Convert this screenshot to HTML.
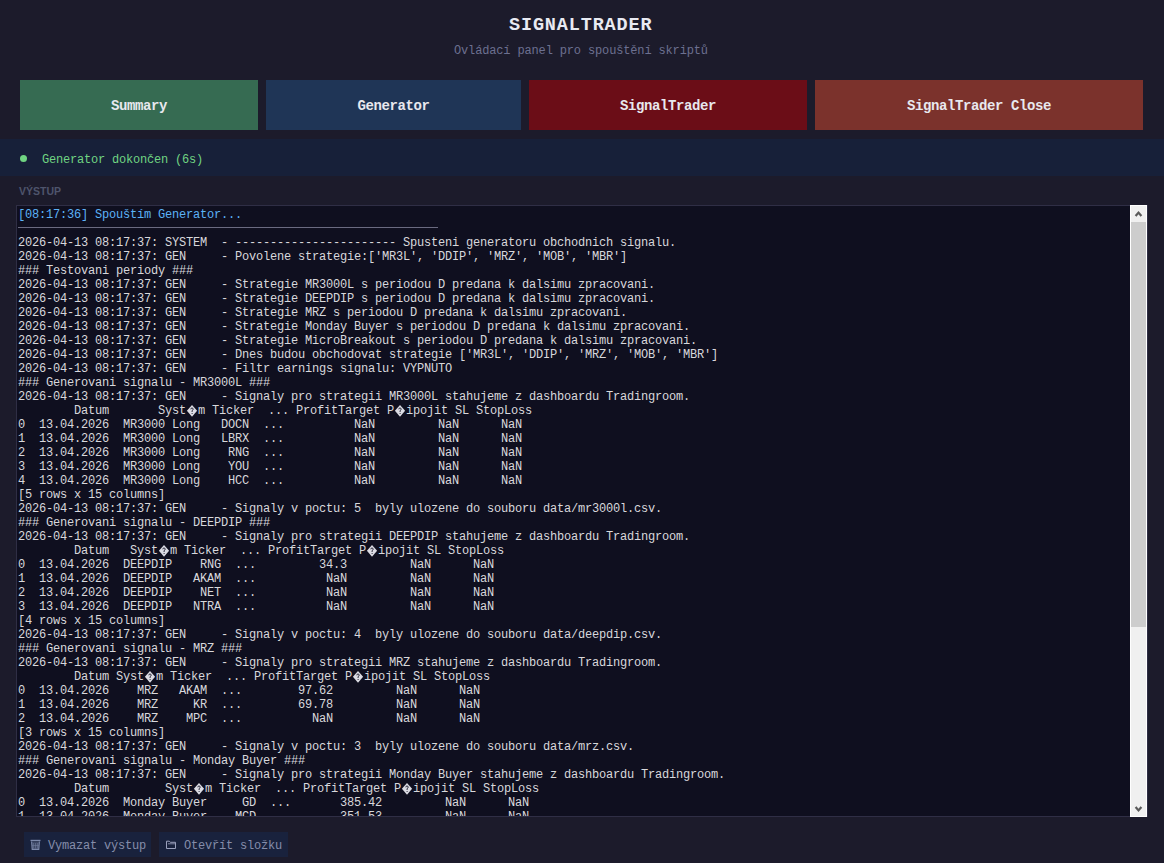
<!DOCTYPE html>
<html><head><meta charset="utf-8">
<style>
*{margin:0;padding:0;box-sizing:border-box}
html,body{width:1164px;height:863px;overflow:hidden;background:#1c1b2b;font-family:"Liberation Mono",monospace}
.abs{position:absolute}
#title{position:absolute;left:509px;top:14px;font-weight:bold;font-size:18.5px;line-height:24px;letter-spacing:0.85px;color:#e8eaf2;white-space:pre}
#sub{position:absolute;left:454px;top:43px;white-space:pre;font-size:12px;line-height:16px;letter-spacing:-0.15px;color:#6c7090}
.btn{position:absolute;top:80px;height:50px;line-height:52px;text-align:center;font-weight:bold;font-size:14px;letter-spacing:-0.4px;color:#e8e8ee}
#b1{left:20px;width:238px;background:#366b52}
#b2{left:266px;width:255px;background:#1f3556}
#b3{left:529px;width:278px;background:#6b0d17}
#b4{left:815px;width:328px;background:#7b322c}
#status{position:absolute;left:0;top:139px;width:1164px;height:37px;background:#172039}
#dot{position:absolute;left:20px;top:155px;width:7px;height:7px;border-radius:50%;background:#70d482}
#stext{position:absolute;left:42px;top:152px;font-size:12px;line-height:16px;letter-spacing:-0.2px;color:#70d482}
#lbl{position:absolute;left:19px;top:184px;font-family:"Liberation Sans",sans-serif;font-weight:bold;font-size:10.5px;line-height:14px;color:#4e546c}
#box{position:absolute;left:16px;top:205px;width:1132px;height:612px;background:#0f0f1f;border:1px solid #2f2e45;overflow:hidden}
#out{position:absolute;left:1px;top:2px;font-size:12px;line-height:14px;letter-spacing:-0.2px;color:#d8d8dc;white-space:pre}
#out div{height:14px}
#out .b{color:#5cb2f6}
#out .sep{position:relative}
#out .sep:after{content:"";position:absolute;left:0;top:5px;width:420px;height:1px;background:#6a6a80}
.rc{display:inline-block;width:12px;height:14px;vertical-align:top;letter-spacing:0}
.rc svg{display:block}
#sb{position:absolute;left:1130px;top:205px;width:17px;height:612px;background:#f0f0f0;border:1px solid #fff}
#thumb{position:absolute;left:1131px;top:222px;width:15px;height:405px;background:#cdcdcd}
.bb{position:absolute;top:832px;height:25px;background:#19223d;color:#858daa;font-size:12px;line-height:25px;letter-spacing:-0.2px;white-space:pre}
#bb1{left:24px;width:127px}
#bb2{left:159px;width:129px}
</style></head><body>
<div id="title">SIGNALTRADER</div>
<div id="sub">Ovládací panel pro spouštění skriptů</div>
<div class="btn" id="b1">Summary</div>
<div class="btn" id="b2">Generator</div>
<div class="btn" id="b3">SignalTrader</div>
<div class="btn" id="b4">SignalTrader Close</div>
<div id="status"></div>
<div id="dot"></div>
<div id="stext">Generator dokončen (6s)</div>
<div id="lbl">VÝSTUP</div>
<div id="box"><div id="out"><div class="b">[08:17:36] Spouštím Generator...</div><div class="sep"></div><div>2026-04-13 08:17:37: SYSTEM  - ----------------------- Spusteni generatoru obchodnich signalu.</div><div>2026-04-13 08:17:37: GEN     - Povolene strategie:[&#x27;MR3L&#x27;, &#x27;DDIP&#x27;, &#x27;MRZ&#x27;, &#x27;MOB&#x27;, &#x27;MBR&#x27;]</div><div>### Testovani periody ###</div><div>2026-04-13 08:17:37: GEN     - Strategie MR3000L s periodou D predana k dalsimu zpracovani.</div><div>2026-04-13 08:17:37: GEN     - Strategie DEEPDIP s periodou D predana k dalsimu zpracovani.</div><div>2026-04-13 08:17:37: GEN     - Strategie MRZ s periodou D predana k dalsimu zpracovani.</div><div>2026-04-13 08:17:37: GEN     - Strategie Monday Buyer s periodou D predana k dalsimu zpracovani.</div><div>2026-04-13 08:17:37: GEN     - Strategie MicroBreakout s periodou D predana k dalsimu zpracovani.</div><div>2026-04-13 08:17:37: GEN     - Dnes budou obchodovat strategie [&#x27;MR3L&#x27;, &#x27;DDIP&#x27;, &#x27;MRZ&#x27;, &#x27;MOB&#x27;, &#x27;MBR&#x27;]</div><div>2026-04-13 08:17:37: GEN     - Filtr earnings signalu: VYPNUTO</div><div>### Generovani signalu - MR3000L ###</div><div>2026-04-13 08:17:37: GEN     - Signaly pro strategii MR3000L stahujeme z dashboardu Tradingroom.</div><div>        Datum       Syst<span class="rc"><svg width="12" height="14" viewBox="0 0 12 14"><path d="M6 0.9 L11.1 6.8 L6 12.7 L0.9 6.8 Z" fill="#dcdce4"/><path d="M4.8 5.3 Q4.8 4 6 4 Q7.2 4 7.2 5.2 Q7.2 6 6.1 6.6 V8" stroke="#2a2a3a" stroke-width="1" fill="none"/><rect x="5.6" y="9" width="1" height="1" fill="#2a2a3a"/></svg></span>m Ticker  ... ProfitTarget P<span class="rc"><svg width="12" height="14" viewBox="0 0 12 14"><path d="M6 0.9 L11.1 6.8 L6 12.7 L0.9 6.8 Z" fill="#dcdce4"/><path d="M4.8 5.3 Q4.8 4 6 4 Q7.2 4 7.2 5.2 Q7.2 6 6.1 6.6 V8" stroke="#2a2a3a" stroke-width="1" fill="none"/><rect x="5.6" y="9" width="1" height="1" fill="#2a2a3a"/></svg></span>ipojit SL StopLoss</div><div>0  13.04.2026  MR3000 Long   DOCN  ...          NaN         NaN      NaN</div><div>1  13.04.2026  MR3000 Long   LBRX  ...          NaN         NaN      NaN</div><div>2  13.04.2026  MR3000 Long    RNG  ...          NaN         NaN      NaN</div><div>3  13.04.2026  MR3000 Long    YOU  ...          NaN         NaN      NaN</div><div>4  13.04.2026  MR3000 Long    HCC  ...          NaN         NaN      NaN</div><div>[5 rows x 15 columns]</div><div>2026-04-13 08:17:37: GEN     - Signaly v poctu: 5  byly ulozene do souboru data/mr3000l.csv.</div><div>### Generovani signalu - DEEPDIP ###</div><div>2026-04-13 08:17:37: GEN     - Signaly pro strategii DEEPDIP stahujeme z dashboardu Tradingroom.</div><div>        Datum   Syst<span class="rc"><svg width="12" height="14" viewBox="0 0 12 14"><path d="M6 0.9 L11.1 6.8 L6 12.7 L0.9 6.8 Z" fill="#dcdce4"/><path d="M4.8 5.3 Q4.8 4 6 4 Q7.2 4 7.2 5.2 Q7.2 6 6.1 6.6 V8" stroke="#2a2a3a" stroke-width="1" fill="none"/><rect x="5.6" y="9" width="1" height="1" fill="#2a2a3a"/></svg></span>m Ticker  ... ProfitTarget P<span class="rc"><svg width="12" height="14" viewBox="0 0 12 14"><path d="M6 0.9 L11.1 6.8 L6 12.7 L0.9 6.8 Z" fill="#dcdce4"/><path d="M4.8 5.3 Q4.8 4 6 4 Q7.2 4 7.2 5.2 Q7.2 6 6.1 6.6 V8" stroke="#2a2a3a" stroke-width="1" fill="none"/><rect x="5.6" y="9" width="1" height="1" fill="#2a2a3a"/></svg></span>ipojit SL StopLoss</div><div>0  13.04.2026  DEEPDIP    RNG  ...         34.3         NaN      NaN</div><div>1  13.04.2026  DEEPDIP   AKAM  ...          NaN         NaN      NaN</div><div>2  13.04.2026  DEEPDIP    NET  ...          NaN         NaN      NaN</div><div>3  13.04.2026  DEEPDIP   NTRA  ...          NaN         NaN      NaN</div><div>[4 rows x 15 columns]</div><div>2026-04-13 08:17:37: GEN     - Signaly v poctu: 4  byly ulozene do souboru data/deepdip.csv.</div><div>### Generovani signalu - MRZ ###</div><div>2026-04-13 08:17:37: GEN     - Signaly pro strategii MRZ stahujeme z dashboardu Tradingroom.</div><div>        Datum Syst<span class="rc"><svg width="12" height="14" viewBox="0 0 12 14"><path d="M6 0.9 L11.1 6.8 L6 12.7 L0.9 6.8 Z" fill="#dcdce4"/><path d="M4.8 5.3 Q4.8 4 6 4 Q7.2 4 7.2 5.2 Q7.2 6 6.1 6.6 V8" stroke="#2a2a3a" stroke-width="1" fill="none"/><rect x="5.6" y="9" width="1" height="1" fill="#2a2a3a"/></svg></span>m Ticker  ... ProfitTarget P<span class="rc"><svg width="12" height="14" viewBox="0 0 12 14"><path d="M6 0.9 L11.1 6.8 L6 12.7 L0.9 6.8 Z" fill="#dcdce4"/><path d="M4.8 5.3 Q4.8 4 6 4 Q7.2 4 7.2 5.2 Q7.2 6 6.1 6.6 V8" stroke="#2a2a3a" stroke-width="1" fill="none"/><rect x="5.6" y="9" width="1" height="1" fill="#2a2a3a"/></svg></span>ipojit SL StopLoss</div><div>0  13.04.2026    MRZ   AKAM  ...        97.62         NaN      NaN</div><div>1  13.04.2026    MRZ     KR  ...        69.78         NaN      NaN</div><div>2  13.04.2026    MRZ    MPC  ...          NaN         NaN      NaN</div><div>[3 rows x 15 columns]</div><div>2026-04-13 08:17:37: GEN     - Signaly v poctu: 3  byly ulozene do souboru data/mrz.csv.</div><div>### Generovani signalu - Monday Buyer ###</div><div>2026-04-13 08:17:37: GEN     - Signaly pro strategii Monday Buyer stahujeme z dashboardu Tradingroom.</div><div>        Datum        Syst<span class="rc"><svg width="12" height="14" viewBox="0 0 12 14"><path d="M6 0.9 L11.1 6.8 L6 12.7 L0.9 6.8 Z" fill="#dcdce4"/><path d="M4.8 5.3 Q4.8 4 6 4 Q7.2 4 7.2 5.2 Q7.2 6 6.1 6.6 V8" stroke="#2a2a3a" stroke-width="1" fill="none"/><rect x="5.6" y="9" width="1" height="1" fill="#2a2a3a"/></svg></span>m Ticker  ... ProfitTarget P<span class="rc"><svg width="12" height="14" viewBox="0 0 12 14"><path d="M6 0.9 L11.1 6.8 L6 12.7 L0.9 6.8 Z" fill="#dcdce4"/><path d="M4.8 5.3 Q4.8 4 6 4 Q7.2 4 7.2 5.2 Q7.2 6 6.1 6.6 V8" stroke="#2a2a3a" stroke-width="1" fill="none"/><rect x="5.6" y="9" width="1" height="1" fill="#2a2a3a"/></svg></span>ipojit SL StopLoss</div><div>0  13.04.2026  Monday Buyer     GD  ...       385.42         NaN      NaN</div><div>1  13.04.2026  Monday Buyer    MCD  ...       351.53         NaN      NaN</div></div></div>
<div id="sb"></div>
<div id="thumb"></div>
<svg class="abs" style="left:1134px;top:209px" width="9" height="9" viewBox="0 0 9 9"><path d="M1.6 7 L4.5 3.6 L7.4 7" stroke="#5a5a5a" stroke-width="2.2" fill="none"/></svg>
<svg class="abs" style="left:1134px;top:805px" width="9" height="9" viewBox="0 0 9 9"><path d="M1.6 2 L4.5 5.4 L7.4 2" stroke="#5a5a5a" stroke-width="2.2" fill="none"/></svg>
<div class="bb" id="bb1"></div>
<div class="bb" id="bb2"></div>
<svg class="abs" style="left:29px;top:838px" width="13" height="14" viewBox="0 0 13 14"><path d="M1.5 2.5 H11.5" stroke="#7d89ab" stroke-width="1.4"/><path d="M2.6 3.5 L3.2 11.4 H9.8 L10.4 3.5" stroke="#7d89ab" stroke-width="1.1" fill="#3c4664"/><path d="M4.6 5 V10.5 M6.5 5 V10.5 M8.4 5 V10.5 M3 7.5 H10" stroke="#6f7a9a" stroke-width="0.6"/></svg>
<svg class="abs" style="left:165px;top:840px" width="12" height="10" viewBox="0 0 12 10"><path d="M1.5 8.5 V1.2 H4.3 L5.3 2.3 H10.5 V8.5 Z" stroke="#9aa0bc" stroke-width="1" fill="none"/><path d="M3 3.8 H10.5" stroke="#9aa0bc" stroke-width="0.8"/></svg>
<div class="abs" style="left:48px;top:838px;font-size:12px;line-height:16px;letter-spacing:-0.2px;color:#858daa;white-space:pre">Vymazat výstup</div>
<div class="abs" style="left:184px;top:838px;font-size:12px;line-height:16px;letter-spacing:-0.2px;color:#858daa;white-space:pre">Otevřít složku</div>
</body></html>
